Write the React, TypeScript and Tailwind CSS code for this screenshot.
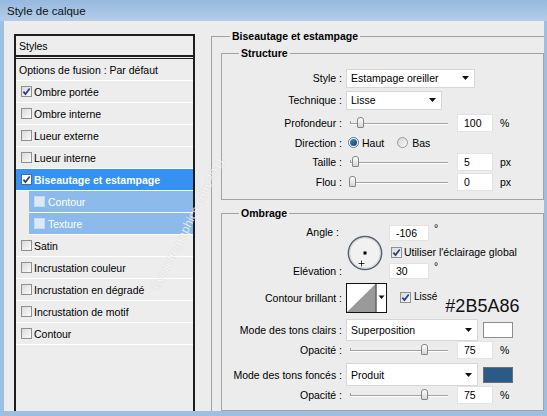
import React from 'react';

type Layer = { label: string; on?: boolean; active?: boolean; sub?: boolean };

const LAYERS: Layer[] = [
  { label: 'Ombre portée', on: true },
  { label: 'Ombre interne' },
  { label: 'Lueur externe' },
  { label: 'Lueur interne' },
  { label: 'Biseautage et estampage', on: true, active: true },
  { label: 'Contour', sub: true },
  { label: 'Texture', sub: true },
  { label: 'Satin' },
  { label: 'Incrustation couleur' },
  { label: 'Incrustation en dégradé' },
  { label: 'Incrustation de motif' },
  { label: 'Contour' },
];

const LABEL = 'w-[120px] shrink-0 text-right';

function Check({ on, tone = 'normal' }: { on?: boolean; tone?: 'normal' | 'white' | 'faded' }) {
  const box =
    tone === 'white'
      ? 'border-[#4d6a92] bg-white'
      : tone === 'faded'
        ? 'border-[#c8daee] bg-[#dce8f6]'
        : 'border-[#8e8f8f] bg-gradient-to-br from-[#d9dadb] to-[#fbfbfb]';
  return (
    <span className={`w-[11px] h-[11px] shrink-0 border flex items-center justify-center ${box}`}>
      {on && (
        <svg viewBox="0 0 9 9" className="w-[9px] h-[9px]">
          <path d="M1.4 4.6 3.5 7.1 7.7 1.5" fill="none" stroke="#233f8c" strokeWidth="1.7" />
        </svg>
      )}
    </span>
  );
}

function Slider({ at }: { at: number }) {
  // at = thumb centre in px from the left end of the track
  return (
    <div className="relative w-[98px] h-[14px] shrink-0">
      <div className="absolute left-0 top-[5px] w-px h-[3px] bg-[#9d9d9d]" />
      <div className="absolute inset-x-0 top-[7px] h-px bg-[#a2a2a2]" />
      <div className="absolute inset-x-0 top-[8px] h-px bg-white" />
      <div
        className="absolute top-[1px] w-[7px] h-[11px] rounded-t-[3px] rounded-b-[1px] border border-[#858585] bg-gradient-to-b from-white to-[#d6d6d6]"
        style={{ left: at - 3 }}
      />
    </div>
  );
}

function Field({ v, className = 'w-[36px] h-[18px]' }: { v: string; className?: string }) {
  return (
    <div className={`shrink-0 flex items-center bg-white border border-[#e2e2e2] pl-[6px] ${className}`}>{v}</div>
  );
}

function Select({ text, className }: { text: string; className: string }) {
  return (
    <div className={`shrink-0 flex items-center justify-between bg-white border border-[#d6d6d6] pl-[4px] pr-[5px] ${className}`}>
      <span>{text}</span>
      <svg viewBox="0 0 7 4" className="w-[7px] h-[4px]">
        <path d="M0 0h7L3.5 4z" fill="#111" />
      </svg>
    </div>
  );
}

function Radio({ on }: { on?: boolean }) {
  return on ? (
    <span className="w-[11px] h-[11px] shrink-0 rounded-full border border-[#5a7896] bg-white flex items-center justify-center">
      <span className="w-[7px] h-[7px] rounded-full bg-gradient-to-br from-[#3f8cc4] to-[#123f66]" />
    </span>
  ) : (
    <span className="block w-[11px] h-[11px] shrink-0 rounded-full border border-[#999] bg-gradient-to-br from-[#d4d4d4] to-[#fafafa]" />
  );
}

function Row({ label, h, className = '', children }: { label: string; h: string; className?: string; children?: React.ReactNode }) {
  return (
    <div className={`flex items-center ${h} ${className}`}>
      <span className={LABEL}>{label}</span>
      <div className="ml-[4px] flex items-center">{children}</div>
    </div>
  );
}

function SliderRow({ label, at, v, unit, h, className = '' }: { label: string; at: number; v: string; unit: string; h: string; className?: string }) {
  return (
    <Row label={label} h={h} className={className}>
      <div className="ml-[4px]">
        <Slider at={at} />
      </div>
      <Field v={v} className="ml-[9px] w-[36px] h-[18px]" />
      <span className="ml-[7px]">{unit}</span>
    </Row>
  );
}

export default function App() {
  return (
    <div className="relative w-[547px] h-[416px] overflow-hidden bg-[#9dc0e2] flex flex-col font-['Liberation_Sans',Arial,sans-serif] text-[10.5px] leading-[12px] text-black">
      {/* title bar */}
      <div className="h-[21px] shrink-0 bg-gradient-to-b from-[#96b9de] to-[#b4cde9] pl-[7px] flex items-center text-[11.5px] text-[#111]">
        Style de calque
      </div>

      <div className="flex-1 min-h-0 ml-[4px] mr-[3px] mb-[5px] border-t-[3px] border-[#f2ecee] bg-[#ececec] flex">
        {/* left: style list */}
        <div className="ml-[10px] mt-[10px] w-[181px] shrink-0 border-2 border-b-0 border-[#1e1e1e] bg-[#ededed] flex flex-col">
          <div className="h-[21px] shrink-0 border-b-2 border-[#1e1e1e] pl-[3px] flex items-center">Styles</div>
          <div className="mt-[1px] border-t border-[#1e1e1e]" />
          <div className="h-[22px] shrink-0 border-b border-white pl-[3px] flex items-center">
            Options de fusion : Par défaut
          </div>
          {LAYERS.map((l, i) =>
            l.sub ? (
              <div key={i} className="h-[22px] shrink-0 pl-[13px] flex">
                <div className="flex-1 bg-[#8cbbeb] border-b border-white flex items-center gap-[3px] pl-[5px] text-white">
                  <Check tone="faded" />
                  <span>{l.label}</span>
                </div>
              </div>
            ) : (
              <div
                key={i}
                className={`h-[22px] shrink-0 border-b border-white flex items-center gap-[2px] pl-[5px] ${
                  l.active ? 'bg-[#3592f0] text-white font-bold' : ''
                }`}
              >
                <Check on={l.on} tone={l.active ? 'white' : 'normal'} />
                <span>{l.label}</span>
              </div>
            ),
          )}
        </div>

        {/* right: settings */}
        <div className="ml-[16px] flex-1 min-w-0 overflow-hidden">
          <fieldset className="mt-[6px] w-[345px] border border-b-0 border-[#a3a3a3] pl-[9px]">
            <legend className="ml-[9px] px-[2px] font-bold leading-[12px]">Biseautage et estampage</legend>

            <fieldset className="mt-[5px] w-[323px] border border-[#a3a3a3]">
              <legend className="ml-[17px] px-[2px] font-bold leading-[12px]">Structure</legend>
              <div className="flex flex-col pt-[9px] pb-[7px]">
                <Row label="Style :" h="h-[20px]">
                  <Select text="Estampage oreiller" className="w-[129px] h-[19px]" />
                </Row>
                <Row label="Technique :" h="h-[20px]" className="mt-[2px]">
                  <Select text="Lisse" className="w-[96px] h-[19px]" />
                </Row>
                <SliderRow label="Profondeur :" at={10} v="100" unit="%" h="h-[20px]" className="mt-[3px]" />
                <Row label="Direction :" h="h-[19px]">
                  <div className="ml-[2px] flex items-center">
                    <Radio on />
                    <span className="ml-[3px]">Haut</span>
                    <span className="ml-[13px]">
                      <Radio />
                    </span>
                    <span className="ml-[4px]">Bas</span>
                  </div>
                </Row>
                <SliderRow label="Taille :" at={5} v="5" unit="px" h="h-[20px]" />
                <SliderRow label="Flou :" at={2} v="0" unit="px" h="h-[20px]" />
              </div>
            </fieldset>

            <fieldset className="mt-[7px] w-[323px] border border-[#a3a3a3]">
              <legend className="ml-[17px] px-[2px] font-bold leading-[12px]">Ombrage</legend>
              <div className="flex flex-col pt-[5px] pb-[6px]">
                {/* angle + elevation */}
                <div className="flex h-[57px]">
                  <div className={`${LABEL} flex flex-col justify-between pt-[2px] pb-[4px]`}>
                    <span className="pr-[3px]">Angle :</span>
                    <span>Elévation :</span>
                  </div>
                  <svg viewBox="0 0 36 36" className="ml-[5px] self-center w-[36px] h-[36px] shrink-0">
                    <circle cx="18" cy="18" r="16.6" fill="#f1f1f1" stroke="#56626f" strokeWidth="1.5" />
                    <circle cx="18" cy="18" r="15.3" fill="none" stroke="#c9cdd2" strokeWidth="0.8" />
                    <rect x="16.5" y="16.5" width="3" height="3" fill="#000" />
                    <path d="M14.5 25.5v6M11.5 28.5h6" stroke="#fff" strokeWidth="2" />
                    <path d="M14.5 25.5v6M11.5 28.5h6" stroke="#000" strokeWidth="0.8" />
                  </svg>
                  <div className="ml-[6px] flex flex-col">
                    <div className="mt-[1px] flex items-start">
                      <Field v="-106" className="w-[40px] h-[16px]" />
                      <span className="ml-[5px] -mt-[3px]">°</span>
                    </div>
                    <div className="mt-[5px] ml-[2px] h-[12px] flex items-center gap-[2px]">
                      <Check on />
                      <span>Utiliser l'éclairage global</span>
                    </div>
                    <div className="mt-[5px] flex items-start">
                      <Field v="30" className="w-[40px] h-[16px]" />
                      <span className="ml-[5px] -mt-[3px]">°</span>
                    </div>
                  </div>
                </div>

                {/* contour brillant */}
                <div className="mt-[2px] h-[30px] flex items-start">
                  <span className={`${LABEL} self-center`}>Contour brillant :</span>
                  <svg viewBox="0 0 41 30" className="ml-[4px] w-[41px] h-[30px] shrink-0">
                    <rect x="0.5" y="0.5" width="40" height="29" fill="#fff" stroke="#111" />
                    <path d="M1 29 29.5 29 29.5 1z" fill="#9a9a9a" />
                    <path d="M30 0.5v29" stroke="#111" />
                    <path d="M32.5 12.5h6l-3 3.5z" fill="#111" />
                  </svg>
                  <div className="ml-[13px] mt-[8px] h-[12px] flex items-center gap-[3px]">
                    <Check on />
                    <span className="text-[10px]">Lissé</span>
                  </div>
                  <span className="ml-[8px] mt-[14px] text-[18px] leading-[18px] text-[#111]">#2B5A86</span>
                </div>

                <Row label="Mode des tons clairs :" h="h-[22px]" className="mt-[6px]">
                  <Select text="Superposition" className="w-[132px] h-[22px]" />
                  <span className="ml-[5px] w-[30px] h-[16px] shrink-0 border border-[#8d8d8d] bg-white" />
                </Row>
                <SliderRow label="Opacité :" at={74} v="75" unit="%" h="h-[18px]" />
                <Row label="Mode des tons foncés :" h="h-[23px]" className="mt-[4px]">
                  <Select text="Produit" className="w-[132px] h-[23px]" />
                  <span className="ml-[5px] w-[30px] h-[16px] shrink-0 border border-[#6f6f6f] bg-[#2b5a86]" />
                </Row>
                <SliderRow label="Opacité :" at={74} v="75" unit="%" h="h-[18px]" />
              </div>
            </fieldset>
          </fieldset>
        </div>
      </div>

      {/* watermark */}
      <span className="pointer-events-none absolute left-[103px] top-[217px] w-[170px] text-center rotate-[-63deg] text-[12px] leading-[14px] text-white opacity-70 [text-shadow:0_0_1px_#b4b4b4]">
        ©violettegraphics.com/2011
      </span>
    </div>
  );
}
